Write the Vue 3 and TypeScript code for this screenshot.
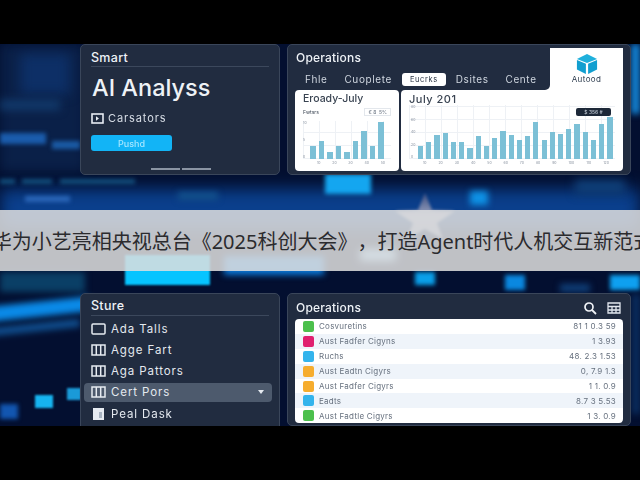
<template>
  <div class="page">
    <div class="letterbox top-box"></div>
    <div class="stage">
      <div class="backdrop">
        <span v-for="(s, i) in streaks" :key="i" class="streak" :style="streakStyle(s)"></span>
        <svg class="star" width="60" height="46" viewBox="0 0 60 46">
          <defs>
            <linearGradient id="starFill" x1="0" y1="0" x2="0" y2="1">
              <stop offset="0" stop-color="#3d4f80" />
              <stop offset="0.5" stop-color="#98a2c0" />
              <stop offset="1" stop-color="#8a94b0" />
            </linearGradient>
          </defs>
          <path d="M30 0 37 17 60 18 42 30 48 46 30 36 12 46 18 30 0 18 23 17Z" fill="url(#starFill)" />
        </svg>
      </div>

      <div class="row row-top">
        <section class="panel smart">
          <h3 class="panel-title">Smart</h3>
          <div class="rule"></div>
          <h1>AI Analyss</h1>
          <div class="cap-line">
            <svg width="13" height="11" viewBox="0 0 13 11">
              <rect x="1" y="1" width="11" height="9" fill="none" stroke="#e8edf3" stroke-width="1.6" />
              <path d="M5 3.2 8 5.5 5 7.8Z" fill="#e8edf3" />
            </svg>
            <span>Carsators</span>
          </div>
          <button class="push">Pushd</button>
          <div class="dashes"><i></i><i></i></div>
        </section>

        <section class="panel ops">
          <div class="ops-head">
            <div class="ops-left">
              <h3 class="panel-title big">Operations</h3>
              <div class="tabs">
                <span v-for="t in tabs" :key="t" class="tab" :class="{ active: t === 'Eucrks' }">{{ t }}</span>
              </div>
            </div>
            <div class="auto-tile">
              <svg width="22" height="22" viewBox="0 0 24 24">
                <path d="M12 1 23 6.5 12 11 1 6.5Z" fill="#1fb0dc" />
                <path d="M1 7.5 10.8 11.8V23L1 18Z" fill="#119fd0" />
                <path d="M23 7.5 13.2 11.8V23L23 18Z" fill="#119fd0" />
              </svg>
              <span>Autood</span>
            </div>
          </div>
          <div class="charts">
            <div class="chart-card small">
              <div class="chart-title">Eroady-July</div>
              <div class="chart-sub">
                <span>Fwtsrs</span>
                <em>€ 8 &nbsp;5%</em>
              </div>
              <div class="plot">
                <div class="axis"><b>10</b><b>5</b><b>0</b></div>
                <div class="bars">
                  <i v-for="(h, i) in smallBars" :key="i" :style="{ height: h + 'px' }"></i>
                </div>
              </div>
              <div class="ticks"><b v-for="n in 5" :key="n">{{ n }}0</b></div>
            </div>
            <div class="chart-card large">
              <div class="chart-title wide">July 201</div>
              <div class="tip">$ 356 #</div>
              <div class="plot">
                <div class="axis"><b>80</b><b>60</b><b>40</b><b>20</b><b>0</b></div>
                <div class="bars tight">
                  <i v-for="(h, i) in largeBars" :key="i" :style="{ height: h + 'px' }"></i>
                </div>
              </div>
              <div class="ticks"><b v-for="n in 12" :key="n">{{ n }}0</b></div>
            </div>
          </div>
        </section>
      </div>

      <div class="row row-bottom">
        <section class="panel store">
          <h3 class="panel-title">Sture</h3>
          <div class="rule"></div>
          <ul class="menu">
            <li v-for="m in menu" :key="m.label" :class="{ on: m.on }">
              <svg v-if="m.icon === 'box'" width="15" height="12" viewBox="0 0 15 12">
                <rect x="1" y="1" width="13" height="10" rx="1" fill="none" stroke="#e6ebf1" stroke-width="1.5" />
              </svg>
              <svg v-else-if="m.icon === 'cols'" width="15" height="12" viewBox="0 0 15 12">
                <path d="M1 1H14V11H1ZM5.3 1V11M9.7 1V11" fill="none" stroke="#e6ebf1" stroke-width="1.5" />
              </svg>
              <svg v-else width="15" height="12" viewBox="0 0 15 12">
                <path d="M2 0H13V12H2Z" fill="#e6ebf1" />
                <path d="M8 4H11V10H8Z" fill="#a9b4c2" />
              </svg>
              <span>{{ m.label }}</span>
              <svg v-if="m.on" class="caret" width="6" height="4" viewBox="0 0 6 4">
                <path d="M0 0H6L3 4Z" fill="#e6ebf1" />
              </svg>
            </li>
          </ul>
        </section>

        <section class="panel list-panel">
          <div class="list-head">
            <h3 class="panel-title big">Operations</h3>
            <div class="list-tools">
              <svg width="14" height="14" viewBox="0 0 14 14">
                <circle cx="6" cy="6" r="4" fill="none" stroke="#f0f3f7" stroke-width="1.7" />
                <path d="M9 9 13 13" stroke="#f0f3f7" stroke-width="1.8" />
              </svg>
              <svg width="14" height="12" viewBox="0 0 14 12">
                <path d="M1 1H13V11H1ZM1 4.5H13M1 8H13M5 4.5V11M9 4.5V11" fill="none" stroke="#e2e7ee" stroke-width="1.3" />
              </svg>
            </div>
          </div>
          <div class="rows">
            <div v-for="(r, i) in rows" :key="i" class="list-row">
              <i :style="{ background: r.color }"></i>
              <span>{{ r.name }}</span>
              <b>{{ r.value }}</b>
            </div>
          </div>
        </section>
      </div>

      <div class="band">
        <p>华为小艺亮相央视总台《2025科创大会》，打造Agent时代人机交互新范式</p>
      </div>
    </div>
    <div class="letterbox bottom-box"></div>
  </div>
</template>

<script setup lang="ts">
interface Streak {
  x: number
  y: number
  w: number
  h: number
  color: string
  blur: number
  rot?: number
}

const tabs = ['Fhle', 'Cuoplete', 'Eucrks', 'Dsites', 'Cente']

const smallBars = [13, 18, 7, 13, 7, 18, 28, 13, 37]
const largeBars = [13, 17, 24, 26, 17, 17, 11, 23, 13, 21, 28, 24, 19, 23, 37, 19, 27, 25, 30, 35, 27, 19, 35, 42]

const menu = [
  { label: 'Ada Talls', icon: 'box', on: false },
  { label: 'Agge Fart', icon: 'cols', on: false },
  { label: 'Aga Pattors', icon: 'cols', on: false },
  { label: 'Cert Pors', icon: 'cols', on: true },
  { label: 'Peal Dask', icon: 'doc', on: false },
]

const rows = [
  { name: 'Cosvuretins', value: '81 1 0.3 59', color: '#4cc04c' },
  { name: 'Aust Fadfer Cigyns', value: '1 3.93', color: '#e0206f' },
  { name: 'Ruchs', value: '48. 2.3 1.53', color: '#34b4ec' },
  { name: 'Aust Eadtn Cigyrs', value: '0, 7.9 1.3', color: '#f6ad2e' },
  { name: 'Aust Fadfer Cigyrs', value: '1 1. 0.9', color: '#f6ad2e' },
  { name: 'Eadts', value: '8.7 3 5.53', color: '#34b4ec' },
  { name: 'Aust Fadtle Cigyrs', value: '1 3. 0.9', color: '#4cc04c' },
]

// blurred light shapes behind the panels, in stage coordinates
const streaks: Streak[] = [
  { x: 0, y: 0, w: 85, h: 128, color: '#0a2048', blur: 6 },
  { x: 20, y: 10, w: 50, h: 40, color: '#0d2f66', blur: 6 },
  { x: 0, y: 56, w: 60, h: 10, color: '#123a6c', blur: 4 },
  { x: 0, y: 89, w: 46, h: 11, color: '#1a5cac', blur: 2 },
  { x: 52, y: 97, w: 28, h: 8, color: '#1a5aa4', blur: 2 },
  { x: 0, y: 145, w: 640, h: 40, color: '#0a3f8c', blur: 8 },
  { x: 0, y: 135, w: 15, h: 5, color: '#124e7c', blur: 2 },
  { x: 22, y: 135, w: 30, h: 5, color: '#124e7c', blur: 2 },
  { x: 60, y: 135, w: 75, h: 5, color: '#124e7c', blur: 2 },
  { x: 25, y: 152, w: 45, h: 6, color: '#2a66b8', blur: 2 },
  { x: 178, y: 148, w: 40, h: 8, color: '#12508c', blur: 3 },
  { x: 325, y: 130, w: 46, h: 20, color: '#14a6f0', blur: 2 },
  { x: 470, y: 147, w: 18, h: 14, color: '#0e92e6', blur: 3 },
  { x: 631, y: 0, w: 9, h: 70, color: '#1486d8', blur: 3 },
  { x: 575, y: 136, w: 50, h: 14, color: '#0f3f78', blur: 5 },
  { x: 0, y: 228, w: 85, h: 20, color: '#0a3f66', blur: 3 },
  { x: 125, y: 211, w: 85, h: 30, color: '#06c4ff', blur: 1 },
  { x: 224, y: 212, w: 100, h: 19, color: '#0a78d8', blur: 3 },
  { x: 360, y: 205, w: 36, h: 12, color: '#9ad6ff', blur: 4 },
  { x: -20, y: 258, w: 110, h: 15, color: '#0a8ae8', blur: 3, rot: -6 },
  { x: -20, y: 280, w: 100, h: 8, color: '#0f4f90', blur: 3, rot: -6 },
  { x: 35, y: 351, w: 18, h: 13, color: '#16b4f0', blur: 1 },
  { x: 67, y: 344, w: 14, h: 12, color: '#1a9ad8', blur: 1 },
  { x: 0, y: 360, w: 18, h: 15, color: '#1256b0', blur: 2 },
  { x: 415, y: 228, w: 20, h: 13, color: '#0aa0ea', blur: 2 },
  { x: 505, y: 231, w: 20, h: 15, color: '#0a88e0', blur: 2 },
  { x: 610, y: 231, w: 30, h: 15, color: '#0ea0f0', blur: 2 },
  { x: 560, y: 240, w: 30, h: 8, color: '#0f3f78', blur: 3 },
  { x: 632, y: 250, w: 8, h: 120, color: '#0a2e60', blur: 3 },
]

const streakStyle = (s: Streak) => ({
  left: s.x + 'px',
  top: s.y + 'px',
  width: s.w + 'px',
  height: s.h + 'px',
  background: s.color,
  filter: `blur(${s.blur}px)`,
  transform: s.rot ? `rotate(${s.rot}deg)` : undefined,
})
</script>

<style>
html,
body {
  margin: 0;
  background: #000;
}
</style>

<style scoped>
.page {
  width: 640px;
  height: 480px;
  overflow: hidden;
  display: flex;
  flex-direction: column;
  background: #000;
  font-family: Inter, "Noto Sans", sans-serif;
}

.letterbox {
  background: #000;
  flex: none;
}

.top-box {
  height: 44px;
}

.bottom-box {
  height: 54px;
}

.stage {
  position: relative;
  height: 382px;
  flex: none;
  overflow: hidden;
  background: #030f30;
}

.backdrop {
  position: absolute;
  inset: 0;
  overflow: hidden;
}

.streak {
  position: absolute;
}

.star {
  position: absolute;
  left: 395px;
  top: 149px;
  filter: blur(1.5px);
}

.row {
  position: relative;
  display: flex;
  gap: 7px;
  padding: 0 9px 0 80px;
  filter: blur(0.6px);
}

.row-top {
  height: 131px;
}

.row-bottom {
  height: 140px;
  margin-top: 118px;
}

.panel {
  box-sizing: border-box;
  background: #212c40;
  border: 1px solid #3a465a;
  border-radius: 5px;
  color: #eef2f6;
}

.smart,
.store {
  width: 200px;
  flex: none;
}

.panel-title {
  margin: 0;
  font-size: 12.5px;
  font-weight: 500;
  line-height: 14px;
  letter-spacing: 0.3px;
}

.panel-title.big {
  font-size: 12px;
  letter-spacing: 0.2px;
}

.rule {
  height: 1px;
  background: #3c485c;
  margin-top: 1px;
}

.smart {
  padding: 6px 10px 0;
}

h1 {
  margin: 7px 0 0 1px;
  font-size: 23.5px;
  font-weight: 500;
  line-height: 28px;
}

.cap-line {
  display: flex;
  align-items: center;
  gap: 4px;
  margin-top: 9px;
  font-size: 11px;
  letter-spacing: 0.9px;
  line-height: 14px;
  color: #d8dee6;
}

.push {
  display: block;
  width: 81px;
  height: 16px;
  margin-top: 10px;
  padding: 0;
  border: 0;
  border-radius: 3px;
  background: #12b4f6;
  color: #a4e6ff;
  font: 500 9px Inter, sans-serif;
}

.dashes {
  display: flex;
  gap: 2px;
  margin: 17px 0 0 60px;
}

.dashes i {
  width: 29px;
  height: 1.5px;
  background: #8a94a3;
}

.ops {
  flex: 1;
  padding: 3px 7px;
  display: flex;
  flex-direction: column;
}

.ops-head {
  display: flex;
  height: 42px;
  flex: none;
  /* white shows only behind the rounded corner of the left part */
  background: linear-gradient(90deg, transparent calc(100% - 78px), #fff 0);
}

.ops-left {
  flex: 1;
  padding-left: 1px;
  background: #212c40;
  border-bottom-right-radius: 5px;
}

.ops-left .panel-title {
  margin-top: 3px;
}

.tabs {
  display: flex;
  align-items: center;
  gap: 10px;
  margin-top: 8px;
  margin-left: 9px;
  font-size: 10px;
  letter-spacing: 0.6px;
  line-height: 13px;
  color: #cfd6df;
}

.tab:not(.active) + .tab:not(.active) {
  margin-left: 7px;
}

.tab.active {
  background: #fff;
  color: #2a3444;
  border-radius: 3px;
  padding: 2px 8px;
  font-size: 7.5px;
  line-height: 9px;
}

.auto-tile {
  width: 73px;
  box-sizing: border-box;
  background: #fff;
  border-radius: 4px 4px 0 0;
  padding-top: 5px;
  display: flex;
  flex-direction: column;
  align-items: center;
  color: #2b3a4c;
  font-size: 8px;
  letter-spacing: 0.4px;
  line-height: 8px;
}

.auto-tile svg {
  display: block;
}

.charts {
  display: flex;
  gap: 2px;
  height: 81px;
  flex: none;
}

.chart-card {
  box-sizing: border-box;
  background: #fff;
  border-radius: 4px;
  color: #3a4452;
  position: relative;
  padding: 3px 8px 0;
}

.chart-card.small {
  width: 104px;
}

.chart-card.large {
  flex: 1;
  border-top-right-radius: 0;
}

.chart-title {
  font-size: 10.5px;
  line-height: 12px;
  font-weight: 500;
}

.chart-title.wide {
  font-size: 11px;
  letter-spacing: 0.5px;
}

.chart-sub {
  display: flex;
  justify-content: space-between;
  align-items: center;
  font-size: 5px;
  margin-top: 3px;
  height: 8px;
}

.chart-sub em {
  font-style: normal;
  border: 1px solid #e3e7ec;
  padding: 0 3px;
  color: #6a7482;
}

.tip {
  position: absolute;
  right: 12px;
  top: 18px;
  width: 35px;
  height: 8px;
  background: #1d2838;
  border-radius: 2px;
  color: #c8d0da;
  font-size: 5px;
  line-height: 8px;
  text-align: center;
}

.plot {
  display: flex;
  align-items: flex-end;
  gap: 2px;
  background-image:
    repeating-linear-gradient(90deg, #eef1f5 0 1px, transparent 1px 16px),
    repeating-linear-gradient(0deg, #eef1f5 0 1px, transparent 1px 13px);
}

.small .plot {
  height: 38px;
  margin-top: 5px;
}

.large .plot {
  height: 54px;
  padding-left: 2px;
}

.axis {
  display: flex;
  flex-direction: column;
  justify-content: space-between;
  align-self: stretch;
  width: 5px;
  font-size: 3.5px;
  color: #8a93a0;
}

.axis b,
.ticks b {
  font-weight: 400;
}

.bars {
  display: flex;
  align-items: flex-end;
  gap: 2.95px;
  flex: 1;
}

.bars i {
  width: 5.6px;
  flex: none;
  background: #7cc0d6;
}

.bars.tight {
  gap: 3.06px;
}

.bars.tight i {
  width: 5.2px;
}

.ticks {
  display: flex;
  justify-content: space-around;
  font-size: 3.5px;
  color: #8a93a0;
  margin-top: 2px;
  padding-left: 8px;
}

.store {
  padding: 5px 7px 0 3px;
}

.store .panel-title {
  padding-left: 7px;
}

.store .rule {
  margin: 2px 3px 0 7px;
}

.menu {
  list-style: none;
  margin: 3px 0 0;
  padding: 0;
  font-size: 11.5px;
  letter-spacing: 0.9px;
  color: #e4e9ef;
}

.menu li {
  display: flex;
  align-items: center;
  gap: 5px;
  height: 19px;
  margin-bottom: 2.3px;
  padding: 0 8px 0 7px;
  border-radius: 4px;
}

.menu li.on {
  background: #4d5a6d;
}

.caret {
  margin-left: auto;
}

.list-panel {
  flex: 1;
  height: 133px;
  padding: 3px 7px;
}

.list-head {
  display: flex;
  justify-content: space-between;
  align-items: center;
  height: 22px;
}

.list-head .panel-title {
  padding-left: 1px;
}

.list-tools {
  display: flex;
  align-items: center;
  gap: 10px;
  padding-right: 2px;
}

.rows {
  background: #fff;
  border-radius: 4px;
  overflow: hidden;
}

.list-row {
  display: flex;
  align-items: center;
  height: 14.9px;
  padding: 0 7px 0 8px;
  font-size: 8px;
  letter-spacing: 0.25px;
  color: #66707e;
}

.list-row:nth-child(even) {
  background: #eff4fa;
}

.list-row i {
  width: 11px;
  height: 11px;
  border-radius: 2px;
  margin-right: 5px;
}

.list-row b {
  margin-left: auto;
  font-weight: 400;
}

.band {
  position: absolute;
  left: 0;
  right: 0;
  top: 166px;
  height: 61px;
  padding-left: 5px;
  box-sizing: border-box;
  background: rgba(222, 222, 222, 0.86);
  display: flex;
  align-items: center;
  justify-content: center;
  overflow: hidden;
}

.band p {
  margin: 0;
  flex: none;
  white-space: nowrap;
  font-family: "Noto Sans", "Noto Sans CJK SC", sans-serif;
  text-spacing-trim: space-all;
  font-size: 20px;
  color: #2b2b2e;
}
</style>
